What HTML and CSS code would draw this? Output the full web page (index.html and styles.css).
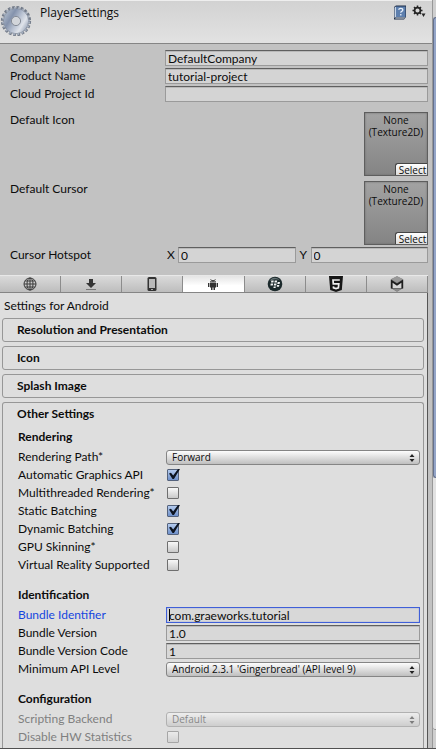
FILE: index.html
```
<!DOCTYPE html>
<html lang="en">
<head>
<meta charset="utf-8">
<title>PlayerSettings</title>
<link rel="stylesheet" href="styles.css">
</head>
<body>
<div class="inspector">
  <main class="content">
    <header class="header">
      <svg class="gear" viewBox="0 0 32 32" aria-hidden="true">
        <defs>
          <linearGradient id="steel" x1="0" y1="0.2" x2="1" y2="0.8">
            <stop offset="0" stop-color="#b4bfce"/><stop offset="0.3" stop-color="#8492ac"/>
            <stop offset="0.55" stop-color="#b9c2d2"/><stop offset="0.75" stop-color="#dfe3ea"/><stop offset="1" stop-color="#8f9cb2"/>
          </linearGradient>
        </defs>
        <circle cx="16" cy="16" r="13.5" fill="none" stroke="#737b89" stroke-width="3.200" stroke-dasharray="2.700 1.541"/>
        <circle cx="16" cy="16" r="12.700" fill="url(#steel)" stroke="#7d8696" stroke-width=".8"/>
        <circle cx="16" cy="16" r="13.200" fill="none" stroke="#a3adbd" stroke-width="2" stroke-dasharray="1.700 2.541" stroke-dashoffset="-.5"/>
        <circle cx="16" cy="16" r="4.6" fill="#d2d5da" stroke="#858b96"/>
      </svg>
      <h1 class="title">PlayerSettings</h1>
      <button class="icon-button" type="button" aria-label="Help">
        <svg width="14" height="15" viewBox="0 0 14 15">
          <path d="M1 2l2-1.500h10V12l-2 2.500H1z" fill="#1c2c46"/>
          <path d="M3 1.500h9.500V12H3z" fill="#5d7fae"/>
          <path d="M1.500 2.500L3 1.500V12l-1.500 1z" fill="#c8d6e8"/>
          <path d="M2 13.500l1-1h9.500l-1.500 1z" fill="#e4e9f0"/>
          <path d="M5.800 4.800q0-1.500 2-1.500t2 1.600q0 1.100-1.200 1.500-.8.300-.8 1.400M7.800 9v1.400" fill="none" stroke="#e8f0fa" stroke-width="1.300"/>
        </svg>
      </button>
      <button class="icon-button" type="button" aria-label="Options">
        <svg width="14" height="13" viewBox="0 0 14 13">
          <circle cx="5.500" cy="5.500" r="2.900" fill="none" stroke="#252525" stroke-width="1.700"/>
          <path d="M5.500 .5v2M5.500 8.500v2M.5 5.500h2M8.500 5.500h2M2 2l1.400 1.400M7.600 7.600L9 9M2 9l1.400-1.400M7.600 3.400L9 2" stroke="#252525" stroke-width="1.500"/>
          <path d="M9.500 8.500h4L11.500 12z" fill="#252525"/>
        </svg>
      </button>
    </header>

    <section class="general">
      <div class="row"><label for="company">Company Name</label><input class="field" id="company" type="text" value="DefaultCompany"></div>
      <div class="row"><label for="product">Product Name</label><input class="field" id="product" type="text" value="tutorial-project"></div>
      <div class="row"><label for="cloud">Cloud Project Id</label><input class="field" id="cloud" type="text"></div>
      <div class="texture-row"><span class="texture-label">Default Icon</span>
        <div class="texture"><span>None</span><span>(Texture2D)</span><button class="pick" type="button">Select</button></div>
      </div>
      <div class="texture-row"><span class="texture-label">Default Cursor</span>
        <div class="texture"><span>None</span><span>(Texture2D)</span><button class="pick" type="button">Select</button></div>
      </div>
      <div class="row hotspot"><span class="row-label">Cursor Hotspot</span>
        <div class="vector">
          <label for="hx">X</label><input class="field" id="hx" type="text" value="0">
          <label for="hy">Y</label><input class="field" id="hy" type="text" value="0">
        </div>
      </div>
    </section>

    <section class="platform">
      <nav class="tabs" aria-label="Platforms">
        <button class="tab" type="button" aria-label="Web">
          <svg width="14" height="14" viewBox="0 0 14 14" fill="none" stroke="#3c3c3c"><circle cx="7" cy="7" r="6"/><ellipse cx="7" cy="7" rx="3" ry="6"/><path d="M7 1v12M1 7h12M2 4h10M2 10h10"/></svg>
        </button>
        <button class="tab" type="button" aria-label="Standalone">
          <svg width="12" height="13" viewBox="0 0 12 13"><path d="M4 1h4v4h3L6 10 1 5h3z" fill="#353535"/><path d="M1 11.500h10" stroke="#777"/></svg>
        </button>
        <button class="tab" type="button" aria-label="iOS">
          <svg width="10" height="14" viewBox="0 0 10 14"><rect x=".5" width="9" height="14" rx="1.500" fill="#333"/><path d="M2 2h6v9H2z" fill="#b9b9b9"/><path d="M4.200 12.500h1.600" stroke="#ccc"/></svg>
        </button>
        <button class="tab active" type="button" aria-label="Android">
          <svg width="10" height="13" viewBox="0 0 10 13" fill="#333"><path d="M2 4.500Q2.200 2 5 2t3 2.500zM2 5h6v4.500H2zM0 5h1.400v4H0zM8.600 5H10v4H8.600zM3 9h1.500v3H3zM5.500 9H7v3H5.500z"/><path d="M2.500 1l1 1.500M7.500 1l-1 1.500" stroke="#333" stroke-width=".7"/><path d="M3.500 3.200h.8v.8h-.8zM5.700 3.200h.8v.8h-.8z" fill="#eee"/></svg>
        </button>
        <button class="tab" type="button" aria-label="BlackBerry">
          <svg width="16" height="16" viewBox="0 0 16 16"><circle cx="8" cy="8" r="7.300" fill="#1c2a2c"/><path d="M2.500 5A6 6 0 0 1 13 4.500Q8 2 2.500 5" fill="#667476"/><path d="M4.300 4.500h2.500l-.4 2H4zM7.700 4.500h2.500l-.4 2H7.400zM3.700 7.600h2.500l-.4 2H3.400zM7.100 7.600h2.500l-.4 2H6.800zM10.700 6h2.300l-.4 1.900h-2.300zM10.100 9h2.300l-.4 1.800H9.700zM6.700 10.500h2.200l-.4 1.500H6.400z" fill="#f1f4f4"/></svg>
        </button>
        <button class="tab" type="button" aria-label="WebGL">
          <svg width="14" height="16" viewBox="0 0 14 16"><path d="M0 0h14l-1.200 14L7 16l-5.800-2z" fill="#161616"/><path d="M10.800 4H4l.3 3.800h5.500l-.4 4L7 12.600l-2.500-.8-.1-1.400" fill="none" stroke="#f0f0f0" stroke-width="1.700"/></svg>
        </button>
        <button class="tab" type="button" aria-label="Samsung TV">
          <svg width="14" height="16" viewBox="0 0 14 16"><path d="M7 .3l6 3v9l-6 3.400-6-3.400v-9z" fill="#777"/><path d="M7 .3l6 3-6 3.500-6-3.500z" fill="#999"/><path d="M.8 3.500L7 7.500l6.200-4V12.500H.8z" fill="#1e1e1e"/><path d="M2.600 6.800L7 9.800l4.400-3V12H2.600z" fill="#d6d6d6"/><path d="M2.500 12.500h9L7 15.500z" fill="#8a8a8a"/></svg>
        </button>
      </nav>
      <div class="panel">
        <p class="caption">Settings for Android</p>
        <section class="group"><h2>Resolution and Presentation</h2></section>
        <section class="group"><h2>Icon</h2></section>
        <section class="group"><h2>Splash Image</h2></section>
        <section class="group open">
          <h2>Other Settings</h2>
          <div class="settings">
            <h3>Rendering</h3>
            <div class="row"><label for="path">Rendering Path*</label><div class="popup"><select id="path"><option>Forward</option></select><svg width="6" height="8" viewBox="0 0 6 8"><path d="M3 0l2.500 3h-5zM3 8L.5 5h5z"/></svg></div></div>
            <div class="row"><label for="auto">Automatic Graphics API</label><input class="check" id="auto" type="checkbox" checked></div>
            <div class="row"><label for="multi">Multithreaded Rendering*</label><input class="check" id="multi" type="checkbox"></div>
            <div class="row"><label for="static">Static Batching</label><input class="check" id="static" type="checkbox" checked></div>
            <div class="row"><label for="dynamic">Dynamic Batching</label><input class="check" id="dynamic" type="checkbox" checked></div>
            <div class="row"><label for="gpu">GPU Skinning*</label><input class="check" id="gpu" type="checkbox"></div>
            <div class="row"><label for="vr">Virtual Reality Supported</label><input class="check" id="vr" type="checkbox"></div>
            <h3>Identification</h3>
            <div class="row selected"><label for="bundle">Bundle Identifier</label><div class="edit"><input class="field" id="bundle" type="text" value="com.graeworks.tutorial"><span class="caret"></span></div></div>
            <div class="row"><label for="version">Bundle Version</label><input class="field" id="version" type="text" value="1.0"></div>
            <div class="row"><label for="code">Bundle Version Code</label><input class="field" id="code" type="text" value="1"></div>
            <div class="row"><label for="api">Minimum API Level</label><div class="popup"><select id="api"><option>Android 2.3.1 'Gingerbread' (API level 9)</option></select><svg width="6" height="8" viewBox="0 0 6 8"><path d="M3 0l2.500 3h-5zM3 8L.5 5h5z"/></svg></div></div>
            <h3>Configuration</h3>
            <div class="row disabled"><label for="backend">Scripting Backend</label><div class="popup"><select id="backend" disabled><option>Default</option></select><svg width="6" height="8" viewBox="0 0 6 8"><path d="M3 0l2.500 3h-5zM3 8L.5 5h5z"/></svg></div></div>
            <div class="row disabled"><label for="stats">Disable HW Statistics</label><input class="check" id="stats" type="checkbox" disabled></div>
          </div>
        </section>
      </div>
    </section>
  </main>
  <div class="scrollbar"><div class="thumb"></div><div class="track"></div><div class="track-end"></div></div>
</div>
</body>
</html>
```
FILE: styles.css
```
* { box-sizing: border-box; }
body {
  margin: 0;
  font: 12px/18px Lato, "Open Sans", sans-serif;
  color: #0c0c0c;
  background: #c2c2c2;
}
button, input, select { font: inherit; color: inherit; margin: 0; }
h1, h2, h3, p { margin: 0; font-size: inherit; }

.inspector {
  display: flex;
  height: 100vh;
  overflow: hidden;
  border-bottom: 1px solid #505050;
}
.content {
  flex: 1;
  min-width: 0;
  display: flex;
  flex-direction: column;
}

.header {
  display: flex;
  flex: none;
  align-items: flex-start;
  height: 44px;
  padding: 4px 6px 0 0;
  border-top: 1px solid #eee;
  border-bottom: 1px solid #858585;
  background: linear-gradient(#d2d2d2, #e2e2e2);
}
.gear { width: 32px; height: 32px; }
.title { flex: 1; margin-left: 8px; font: 12px/16px "Open Sans", sans-serif; }
.icon-button {
  display: flex;
  margin-left: 5px;
  padding: 0;
  border: 0;
  background: none;
}

.general { padding: 5px 4px 0 10px; }
.row { display: flex; align-items: center; height: 18px; }
.row > label, .row-label { flex: none; width: 155px; white-space: nowrap; }
.field {
  flex: 1;
  min-width: 0;
  width: 100%;
  height: 16px;
  padding: 0 2px;
  line-height: 14px;
  border: 1px solid #9a9a9a;
  border-top-color: #5f5f5f;
  border-radius: 0;
  background: #d4d4d4;
  box-shadow: inset 0 1px #b9b9b9;
  outline: 0;
}

.texture-row {
  display: flex;
  justify-content: space-between;
  margin-bottom: 5px;
}
.texture-row:nth-of-type(4) { margin-top: 9px; }
.texture-label { line-height: 16px; }
.texture {
  position: relative;
  display: flex;
  flex-direction: column;
  width: 64px;
  height: 64px;
  padding-top: 1px;
  border: 1px solid #5e5e5e;
  background: linear-gradient(#a3a3a3, #848484);
  box-shadow: inset 0 0 2px #666;
  font: 10px/12px "Open Sans", sans-serif;
  text-align: center;
}
.pick {
  position: absolute;
  right: 0;
  bottom: 0;
  height: 12px;
  width: 32px;
  padding: 0 0 0 2px;
  border: 0;
  border-top: 1px solid #444;
  border-left: 1px solid #444;
  border-top-left-radius: 3px;
  background: linear-gradient(#fff, #dcdcdc);
  line-height: 12px;
}
.hotspot { margin-top: -4px; }
.vector { flex: 1; display: flex; align-items: center; }
.vector label { width: 11px; margin-left: 2px; }
.vector label + .field + label { margin-left: 4px; }

.platform {
  flex: 1;
  display: flex;
  flex-direction: column;
  min-height: 0;
  margin: 11px 4px 0 0;
}
.tabs {
  display: flex;
  flex: none;
  height: 18px;
  border-top: 1px solid #e8e8e8;
  border-bottom: 1px solid #858585;
}
.tab {
  flex: 1;
  display: flex;
  align-items: center;
  justify-content: center;
  padding: 0;
  border: 0;
  border-right: 1px solid #8c8c8c;
  background: linear-gradient(#dadada, #bdbdbd);
}
.tab.active { background: linear-gradient(#e4e4e4, #fff 60%); }
.panel {
  flex: 1;
  display: flex;
  flex-direction: column;
  min-height: 0;
  padding: 4px 3px 0 2px;
  border-right: 1px solid #555;
  background: #dedede;
}
.caption { flex: none; padding-left: 2px; margin-bottom: 3px; }
.group {
  flex: none;
  margin-bottom: 4px;
  border: 1px solid #979797;
  border-radius: 3px;
}
.group h2 { padding-left: 14px; line-height: 22px; font-weight: 700; }
.group.open {
  flex: 1;
  min-height: 0;
  margin: 0;
  border-bottom: 0;
  border-radius: 3px 3px 0 0;
}
.settings { padding: 3px 3px 0 15px; }
.settings h3 { margin: 12px 0 2px; font-weight: 700; }
.settings h3:first-child { margin-top: 0; }
.settings .row > label { width: 148px; }
.settings .field { background: #d8d8d8; }

.popup { position: relative; flex: 1; display: flex; }
.popup select {
  width: 100%;
  height: 15px;
  padding: 0 16px 0 5px;
  appearance: none;
  border: 1px solid #858585;
  border-radius: 3px;
  background: linear-gradient(#fdfdfd, #bfbfbf);
  font: 10px/13px "Open Sans", sans-serif;
}
.popup svg { position: absolute; right: 5px; top: 4px; fill: #222; pointer-events: none; }

.check {
  position: relative;
  appearance: none;
  width: 12px;
  height: 12px;
  margin-left: 1px;
  border: 1px solid #6f6f6f;
  border-radius: 1px;
  background: linear-gradient(#f8f8f8, #c9c9c9);
}
.check:checked { background: linear-gradient(#b4cbee, #6e90ca); border-color: #54627c; }
.check:checked::after {
  content: "";
  position: absolute;
  left: 1px;
  top: -1px;
  width: 11px;
  height: 10px;
  background: #0d1420;
  clip-path: polygon(0 45%, 18% 38%, 38% 65%, 82% 0, 100% 0, 45% 100%, 32% 100%);
}

.edit { position: relative; flex: 1; display: flex; }
.selected { color: #1546df; }
.selected .field { color: #0c0c0c; border-color: #3f5fd8; box-shadow: inset 0 0 1px #3f5fd8; }
.caret { position: absolute; left: 3px; top: 2px; width: 1px; height: 12px; background: #000; }

.disabled { color: #808080; }
.disabled select, .disabled .check, .disabled svg { opacity: 0.5; }
.disabled select { color: #303030; }

.scrollbar {
  display: flex;
  flex: none;
  flex-direction: column;
  width: 4px;
  padding-top: 17px;
  border-left: 1px solid #989898;
  background: #cfcfcf;
}
.thumb {
  flex: 461;
  border: 1px solid #65718c;
  border-right: 0;
  border-radius: 4px 0 0 4px;
  background: #94a5c8;
}
.track { flex: 252; background: #e2e2e2; border-bottom: 1px solid #888; border-bottom-left-radius: 4px; }
.track-end { flex: 18; }
```
